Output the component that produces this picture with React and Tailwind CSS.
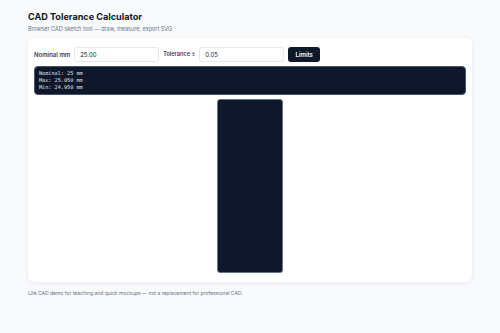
import React from 'react'

const App = () => {
  return (
    <div className="min-h-screen bg-[#f8fafc] px-[28px] pt-[10px] font-['Inter',sans-serif]">
      <h1 className="text-[9.1px] font-bold leading-[13px] text-[#0f172a]">CAD Tolerance Calculator</h1>
      <p className="mt-[2px] text-[5.5px] leading-[8px] text-[#64748b]">
        Browser CAD sketch tool — draw, measure, export SVG
      </p>

      <div className="mt-[5px] rounded-[6px] bg-white px-[6px] py-[9px] shadow-[0_1px_4px_rgba(15,23,42,0.08)]">
        <div className="flex items-center gap-[4px]">
          <span className="text-[6px] font-semibold text-[#334155]">Nominal mm</span>
          <input
            defaultValue="25.00"
            className="h-[15px] w-[85px] rounded-[3px] border border-[#e5e7eb] px-[5px] text-[6px] text-[#0f172a] outline-none"
          />
          <span className="text-[5.6px] font-semibold text-[#334155]">Tolerance ±</span>
          <input
            defaultValue="0.05"
            className="h-[15px] w-[85px] rounded-[3px] border border-[#e5e7eb] px-[5px] text-[6px] text-[#0f172a] outline-none"
          />
          <button className="h-[15px] w-[32px] rounded-[3px] bg-[#0f172a] text-[6px] font-semibold text-white">
            Limits
          </button>
        </div>

        <div className="mt-[4px] rounded-[4px] border border-[#475569] bg-[#0f172a] px-[4px] py-[3px] font-['DejaVu_Sans_Mono',monospace] text-[5.2px] leading-[7px] text-[#e2e8f0]">
          <div>Nominal: 25 mm</div>
          <div>Max: 25.050 mm</div>
          <div>Min: 24.950 mm</div>
        </div>

        <div className="mt-[4px] flex justify-center">
          <div className="h-[174px] w-[66px] rounded-[3px] border border-[#64748b] bg-[#0f172a]" />
        </div>
      </div>

      <p className="mt-[8px] text-[5px] leading-[7px] text-[#64748b]">
        Lite CAD demo for teaching and quick mockups — not a replacement for professional CAD.
      </p>
    </div>
  )
}

export default App
